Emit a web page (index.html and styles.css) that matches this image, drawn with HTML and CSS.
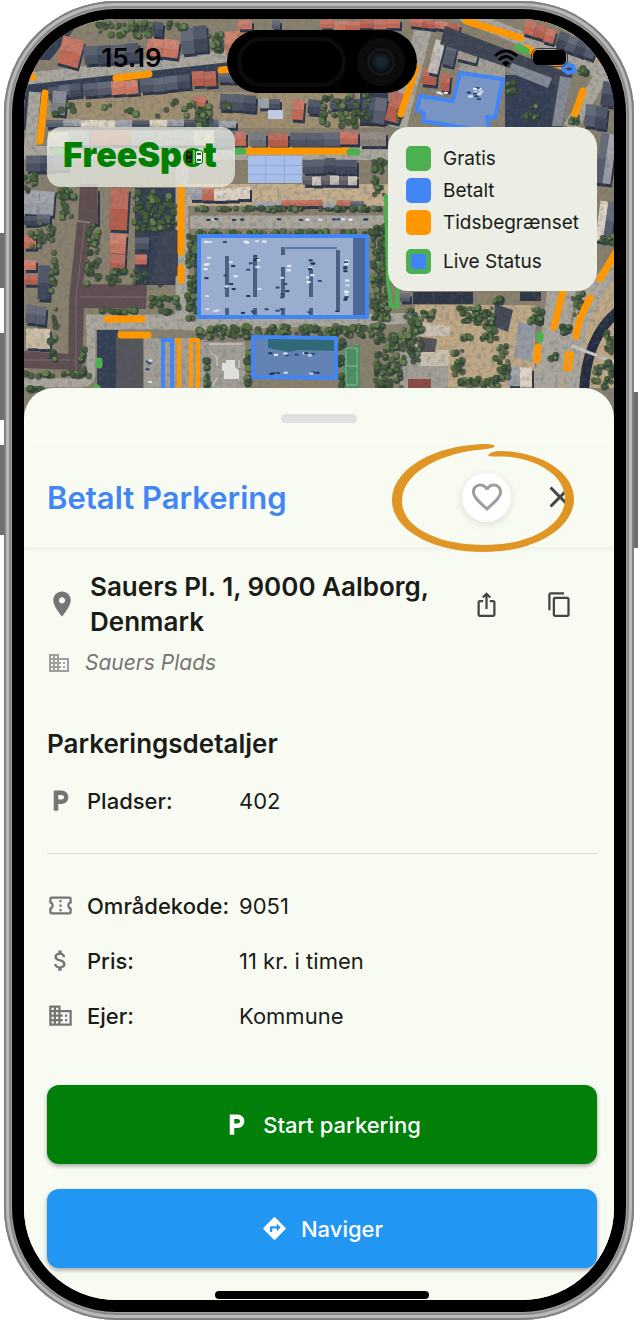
FILE: index.html
```html
<!DOCTYPE html>
<html lang="da">
<head>
  <meta charset="UTF-8">
  <meta name="viewport" content="width=device-width, initial-scale=1.0">
  <title>FreeSpot - Betalt Parkering</title>
  <link rel="stylesheet" href="styles.css">
</head>
<body>
  <div class="phone">
    <span class="side-button action"></span>
    <span class="side-button volume-up"></span>
    <span class="side-button volume-down"></span>
    <span class="side-button power"></span>
    <div class="bezel">
      <main class="screen">

        <section class="map">
          <svg class="map-picture" viewBox="24 19 590 400" preserveAspectRatio="xMidYMin slice" aria-hidden="true">
            <defs>
              <filter id="grain" x="0" y="0" width="100%" height="100%">
                <feTurbulence type="fractalNoise" baseFrequency="0.22" numOctaves="3" seed="4"/>
                <feColorMatrix values="0 0 0 0 0.1  0 0 0 0 0.13  0 0 0 0 0.18  2.6 0 0 0 -1.15"/>
              </filter>
            </defs>
            <rect x="24" y="19" width="590" height="400" fill="#8a816d"/>
            <!-- ground areas -->
            <path fill="#a08f70" d="M24 92H388V128H24z"/>
            <path fill="#c4ae8c" d="M185 184H388V206H185z"/>
            <path fill="#343e52" d="M24 74L230 62V74L48 96L44 130H24z M135 188H178V285H135z M97 330H118V388H97z M505 75H556V128H505z M360 93H388V126H360z M24 22H80L50 60H24z"/>
            <path fill="#bfa885" d="M415 305H535V388H415z M580 290L614 262V388H560z M560 19H614V90z"/>
            <!-- roads -->
            <g fill="none" stroke="#aca79d">
              <path stroke-width="12" d="M24 79L230 56"/>
              <path stroke-width="12" d="M35 92L30 150"/>
              <path stroke-width="14" d="M24 153H388"/>
              <path stroke-width="13" d="M182 160V322"/>
              <path stroke-width="13" d="M190 222H384"/>
              <path stroke-width="11" d="M186 325L420 318"/>
              <path stroke-width="15" d="M86 322H200"/>
              <path stroke-width="9" d="M91 316V372Q91 383 80 383H24"/>
              <path stroke-width="17" d="M426 19L398 128"/>
              <path stroke-width="14" d="M462 14L530 42L614 78"/>
              <path stroke-width="14" d="M610 62L570 128"/>
              <path stroke-width="28" d="M562 288L546 392"/>
              <path stroke-width="16" d="M614 268Q570 310 572 392"/>
            </g>
            <path fill="none" stroke="#242d3d" stroke-width="10" d="M617 312Q586 338 584 392"/>
            <path fill="none" stroke="#c9c7c1" stroke-width="3" d="M572 346L614 362"/>
            <path fill="#a39f95" d="M144 338H204V388H144z M204 342H245V388H204z M400 352H448V388H400z M465 50L505 62V80L458 70z"/>
            <g id="map-rows"></g>
            <!-- large buildings -->
            <path fill="#5f4d4f" d="M77 222L93 224L83 284L147 285L146 309L84 308L82 372H68L69 300z M24 351L70 354V370L24 368z M80 184H97V223L78 220z"/>
            <path fill="none" stroke="#806a69" stroke-width="1" d="M85 222L76 298V370M80 297H146M24 360H70"/>
            <path fill="#54555a" d="M116 337H143V388H116z"/>
            <path fill="#3d4351" d="M160 230H178V275L160 288L152 280z M445 26L560 70L574 66L562 128H550L556 84L440 44z"/>
            <path fill="#858b96" d="M512 63L552 78L548 88L508 72z M560 76L572 78L562 126H552z"/>
            <path fill="#2f3542" d="M413 292H473V304H413z M520 292H541V301H520z"/>
            <path fill="#969ba3" d="M518 322L536 325L531 362L515 357z"/>
            <path fill="#434753" d="M495 304L513 310L508 332L493 326z"/>
            <path fill="#cbbfae" d="M420 322L450 326V336H420z M420 350H449V366H420z"/>
            <path fill="#555357" d="M420 337L437 339L435 352H420z"/>
            <path fill="#8c4a44" d="M408 379H431V388H408z"/>
            <path fill="#4e9063" d="M343 345H360V388H343z"/>
            <path fill="none" stroke="#8dbf96" stroke-width="1" d="M346 348H357V385H346zM346 366H357"/>
            <g id="map-trees"></g>
            <rect x="24" y="19" width="590" height="400" filter="url(#grain)" opacity="0.35"/>
            <path fill="#dedfdc" d="M226 360H235V367L239 370V379H224V371H222V363H226z"/>
            <path fill="none" stroke="#d5d5d0" stroke-width="1" d="M209 344H242M211 353L217 357V366M212 386L217 378M239 360V368"/>
            <g fill="#a8bde8">
              <path d="M248 156H302V183H248z"/>
              <path fill="#8ea9dc" d="M248 165H302V166H248z M265 156H266V183H265z M284 156H285V183H284z M248 174H302V175H248z"/>
              <path fill="#c0cbe2" d="M268 110H283V119H268z"/>
            </g>
            <!-- parking lots -->
            <g stroke="#4285f4" stroke-width="4" stroke-linejoin="round">
              <path fill="#9badce" d="M199 236H367V317H199z"/>
              <path fill="#6483b5" d="M253 337L336 338V378L253 377z"/>
              <path fill="#7894c2" d="M460 73L503 79L495 118L487 117L490 132L423 121L424 113L417 110L420 96L453 101z"/>
            </g>
            <path fill="#2b4a83" opacity="0.7" d="M353 238H365V315H353z"/>
            <path fill="none" stroke="#4b5f83" stroke-width="4" d="M227 256V297M255 256V297M283 267V297M311 267V297M338 250V312M227 308V315M255 308V315M283 308V315M311 308V315M283 247V255"/>
            <path fill="none" stroke="#5b77a5" stroke-width="2" d="M283 248H337"/>
            <path fill="#2f6a79" d="M268 339L334 340V351L300 350L288 352L268 348z"/>
            <g id="map-cars"></g>
            <!-- street parking -->
            <g fill="none" stroke="#ff9800" stroke-width="7" stroke-linecap="round">
              <path d="M116 78L149 74M221 70L232 69M45 93L40 141M30 77H33"/>
              <path d="M181 188V252M181 268V280M107 319H142M121 335H148"/>
              <path d="M466 21L521 38M526 48L562 66M583 91L575 114M416 68L401 114"/>
              <path d="M563 290L554 327M590 298Q578 320 576 336M616 252L600 279M538 347L537 360"/>
              <path stroke-linecap="butt" d="M244 151H350"/>
            </g>
            <g fill="none" stroke="#ff9800" stroke-width="4" stroke-linejoin="round">
              <path d="M175 340H179V392M191 392V340H198V392M567 353L572 354L570 369H565z"/>
            </g>
            <g fill="none" stroke="#4caf50" stroke-width="7" stroke-linecap="round">
              <path d="M54 151H61M236 151H243M350 152H357M99 361V365M97 388V392M540 335V339M518 47L526 51"/>
              <path stroke-width="4" d="M386 196L388 280L391 306L397 307V288"/>
            </g>
            <path fill="none" stroke="#4285f4" stroke-width="4" d="M163 392V340H172V392M565 64L573 66L575 71L568 73L563 69z"/>
          </svg>

          <header class="status-bar">
            <time class="clock">15.19</time>
            <div class="island">
              <span class="speaker"></span>
              <span class="camera"></span>
            </div>
            <div class="status-icons">
              <svg class="wifi" viewBox="0 0 26 20" aria-hidden="true">
                <path d="M2 8Q13-2 24 8M6 12Q13 5 20 12" fill="none" stroke="#000" stroke-width="3"/>
                <path d="M9 15Q13 11 17 15L13 19z"/>
              </svg>
              <span class="battery"></span>
            </div>
          </header>

          <div class="map-overlay">
            <div class="logo">
              <span class="logo-text">FreeSpot</span>
              <svg class="logo-cars" viewBox="0 0 18 14" aria-hidden="true">
                <rect width="18" height="14" rx="3" fill="#008000"/>
                <rect x="1" y="1" width="6" height="12" rx="2"/>
                <path d="M2 4H6M2 10H6" stroke="#00a000"/>
                <path d="M9 0V14" stroke="#e8ece4"/>
                <rect x="11" y="1" width="6" height="12" rx="2" fill="#fff"/>
                <path d="M12 4H16M12 10H16" stroke="#008000" stroke-width="2"/>
              </svg>
            </div>
            <ul class="legend">
              <li><span class="swatch free"></span>Gratis</li>
              <li><span class="swatch paid"></span>Betalt</li>
              <li><span class="swatch limited"></span>Tidsbegrænset</li>
              <li class="legend-live"><span class="swatch live"></span>Live Status</li>
            </ul>
          </div>
        </section>

        <section class="sheet">
          <div class="handle"></div>

          <header class="sheet-header">
            <h1>Betalt Parkering</h1>
            <div class="actions">
              <button class="icon-button favorite" aria-label="Favorit">
                <svg class="icon-large" viewBox="0 0 24 24"><path d="M16.500 3c-1.740 0-3.410.810-4.500 2.090C10.910 3.810 9.240 3 7.500 3 4.420 3 2 5.420 2 8.500c0 3.780 3.400 6.860 8.550 11.540L12 21.350l1.450-1.320C18.600 15.360 22 12.280 22 8.500 22 5.420 19.580 3 16.500 3zm-4.400 15.550l-.1.100-.1-.1C7.140 14.240 4 11.390 4 8.500 4 6.500 5.500 5 7.500 5c1.540 0 3.040.990 3.570 2.360h1.870C13.460 5.990 14.960 5 16.500 5c2 0 3.500 1.500 3.500 3.500 0 2.890-3.140 5.740-7.900 10.050z"/></svg>
              </button>
              <button class="icon-button" aria-label="Luk">
                <svg class="icon-large" viewBox="0 0 24 24"><path d="M19 6.410L17.590 5 12 10.590 6.410 5 5 6.410 10.590 12 5 17.590 6.410 19 12 13.410 17.590 19 19 17.590 13.410 12z"/></svg>
              </button>
            </div>
            <svg class="highlight" viewBox="0 0 184 110" aria-hidden="true">
              <path d="M104 3C100 0 90 1 80 2C36 6 1 29 1 57C1 87 41 109 93 109C146 109 183 84 183 56C183 28 148 9 111 8C102 8 98 10 97 13C104 14 112 13 120 14C150 18 174 34 174 56C174 80 142 102 94 102C46 102 11 84 11 58C11 32 44 12 86 7C94 6 102 6 104 3z"/>
            </svg>
          </header>

          <div class="details">
            <div class="address">
              <svg class="pin" viewBox="0 0 24 24" aria-hidden="true"><path d="M12 2C8.130 2 5 5.130 5 9c0 5.250 7 13 7 13s7-7.750 7-13c0-3.870-3.130-7-7-7zm0 9.500c-1.380 0-2.500-1.120-2.500-2.500s1.120-2.500 2.500-2.500 2.500 1.120 2.500 2.500-1.120 2.500-2.500 2.500z"/></svg>
              <h2>Sauers Pl. 1, 9000 Aalborg, Denmark</h2>
              <div class="actions">
                <button class="icon-button" aria-label="Del">
                  <svg class="icon" viewBox="0 0 24 24"><path d="M16 5l-1.420 1.420-1.590-1.590V16h-1.980V4.830L9.420 6.420 8 5l4-4 4 4zm4 5v11c0 1.100-.9 2-2 2H6c-1.110 0-2-.9-2-2V10c0-1.110.890-2 2-2h3v2H6v11h12V10h-3V8h3c1.100 0 2 .890 2 2z"/></svg>
                </button>
                <button class="icon-button" aria-label="Kopier">
                  <svg class="icon" viewBox="0 0 24 24"><path d="M16 1H4c-1.100 0-2 .9-2 2v14h2V3h12V1zm3 4H8c-1.100 0-2 .9-2 2v14c0 1.100.9 2 2 2h11c1.100 0 2-.9 2-2V7c0-1.100-.9-2-2-2zm0 16H8V7h11v14z"/></svg>
                </button>
              </div>
            </div>
            <p class="place">
              <svg class="icon-small" viewBox="0 0 24 24" aria-hidden="true"><path d="M12 7V3H2v18h20V7H12zM6 19H4v-2h2v2zm0-4H4v-2h2v2zm0-4H4V9h2v2zm0-4H4V5h2v2zm4 12H8v-2h2v2zm0-4H8v-2h2v2zm0-4H8V9h2v2zm0-4H8V5h2v2zm10 12h-8v-2h2v-2h-2v-2h2v-2h-2V9h8v10zm-2-8h-2v2h2v-2zm0 4h-2v2h2v-2z"/></svg>
              <em>Sauers Plads</em>
            </p>

            <h2 class="details-title">Parkeringsdetaljer</h2>
            <dl class="facts">
              <div class="fact">
                <dt>
                  <svg class="icon" viewBox="0 0 24 24" aria-hidden="true"><path d="M13 3H6v18h4v-6h3c3.310 0 6-2.690 6-6s-2.690-6-6-6zm.2 8H10V7h3.200c1.100 0 2 .9 2 2s-.9 2-2 2z"/></svg>
                  Pladser:
                </dt>
                <dd>402</dd>
              </div>
            </dl>
            <hr>
            <dl class="facts">
              <div class="fact">
                <dt>
                  <svg class="icon" viewBox="0 0 24 24" aria-hidden="true"><path d="M22 10V6c0-1.110-.9-2-2-2H4c-1.100 0-1.990.890-1.990 2v4c1.100 0 1.990.9 1.990 2s-.890 2-2 2v4c0 1.100.9 2 2 2h16c1.100 0 2-.9 2-2v-4c-1.100 0-2-.9-2-2s.9-2 2-2zm-2-1.460c-1.190.690-2 1.990-2 3.460s.810 2.770 2 3.460V18H4v-2.540c1.190-.690 2-1.990 2-3.460 0-1.480-.8-2.770-1.990-3.460L4 6h16v2.540zM11 15h2v2h-2zm0-4h2v2h-2zm0-4h2v2h-2z"/></svg>
                  Områdekode:
                </dt>
                <dd>9051</dd>
              </div>
              <div class="fact">
                <dt>
                  <svg class="icon" viewBox="0 0 24 24" aria-hidden="true"><path d="M11.800 10.900c-2.270-.590-3-1.200-3-2.150 0-1.090 1.010-1.850 2.700-1.850 1.780 0 2.440.850 2.500 2.100h2.210c-.070-1.720-1.120-3.300-3.210-3.810V3h-3v2.160c-1.940.420-3.500 1.680-3.500 3.610 0 2.310 1.910 3.460 4.700 4.130 2.500.6 3 1.480 3 2.410 0 .690-.490 1.790-2.700 1.790-2.060 0-2.870-.920-2.980-2.100h-2.200c.120 2.190 1.760 3.420 3.680 3.830V21h3v-2.150c1.950-.370 3.500-1.500 3.500-3.550 0-2.840-2.430-3.810-4.700-4.400z"/></svg>
                  Pris:
                </dt>
                <dd>11 kr. i timen</dd>
              </div>
              <div class="fact">
                <dt>
                  <svg class="icon" viewBox="0 0 24 24" aria-hidden="true"><path d="M12 7V3H2v18h20V7H12zM6 19H4v-2h2v2zm0-4H4v-2h2v2zm0-4H4V9h2v2zm0-4H4V5h2v2zm4 12H8v-2h2v2zm0-4H8v-2h2v2zm0-4H8V9h2v2zm0-4H8V5h2v2zm10 12h-8v-2h2v-2h-2v-2h2v-2h-2V9h8v10zm-2-8h-2v2h2v-2zm0 4h-2v2h2v-2z"/></svg>
                  Ejer:
                </dt>
                <dd>Kommune</dd>
              </div>
            </dl>

            <button class="main-button start">
              <svg class="icon" viewBox="0 0 24 24" aria-hidden="true"><path d="M13 3H6v18h4v-6h3c3.310 0 6-2.690 6-6s-2.690-6-6-6zm.2 8H10V7h3.200c1.100 0 2 .9 2 2s-.9 2-2 2z"/></svg>
              Start parkering
            </button>
            <button class="main-button navigate">
              <svg class="icon" viewBox="0 0 24 24" aria-hidden="true"><path d="M21.710 11.290l-9-9c-.390-.390-1.020-.390-1.410 0l-9 9c-.390.390-.390 1.020 0 1.410l9 9c.390.390 1.020.390 1.410 0l9-9c.390-.380.390-1.010 0-1.410zM14 14.500V12h-4v3H8v-4c0-.550.450-1 1-1h5V7.500l3.500 3.500-3.500 3.500z"/></svg>
              Naviger
            </button>
            <div class="home-bar"></div>
          </div>
        </section>

      </main>
    </div>
  </div>
  <script src="map.js"></script>
</body>
</html>
```
FILE: styles.css
```css
* {
  box-sizing: border-box;
}

body {
  margin: 0;
  background-color: #fff;
  font-family: Inter, "Liberation Sans", sans-serif;
  color: #1a1c18;
}

h1, h2, p, ul, dl, dd {
  margin: 0;
  padding: 0;
}

button {
  border: none;
  padding: 0;
  font-family: inherit;
  cursor: pointer;
}

svg {
  display: block;
  fill: currentColor;
}

/* phone frame */
.phone {
  position: relative;
  margin: 1px 6px 0 4px;
  padding: 8px;
  border-radius: 112px;
  background-color: #a5a5a5;
  box-shadow: inset 0 0 1px 2px #7d7d80, inset 0 0 1px 5px #bdbdbb, inset 0 0 1px 7px #858585;
}

.bezel {
  padding: 10px 12px 12px;
  border-radius: 104px;
  background-color: #000;
}

.screen {
  overflow: hidden;
  border-radius: 92px;
  background-color: #f8fbf2;
}

.side-button {
  position: absolute;
  left: -4px;
  width: 4px;
  background-color: #6f6f73;
}

.action {
  top: 232px;
  height: 55px;
}

.volume-up {
  top: 332px;
  height: 87px;
}

.volume-down {
  top: 444px;
  height: 90px;
}

.power {
  top: 391px;
  left: auto;
  right: -4px;
  height: 156px;
}

/* map */
.map {
  position: relative;
  height: 400px;
  overflow: hidden;
}

.map-picture {
  position: absolute;
  top: 0;
  left: 0;
  width: 100%;
  height: 100%;
}

.status-bar {
  position: relative;
  display: grid;
  grid-template-columns: 1fr 190px 1fr;
  align-items: center;
  padding: 11px 0 0 6px;
  color: #000;
}

.clock {
  padding-left: 6px;
  padding-bottom: 8px;
  text-align: center;
  font-size: 26px;
  font-weight: 600;
}

.island {
  display: flex;
  align-items: center;
  justify-content: space-between;
  height: 63px;
  padding: 0 12px 0 10px;
  border-radius: 32px;
  background-color: #000;
}

.speaker {
  width: 109px;
  height: 50px;
  border: 4px solid #0c0c0c;
  border-radius: 25px;
}

.camera {
  width: 48px;
  height: 48px;
  border: 9px solid #0c0c0c;
  border-radius: 50%;
  background: radial-gradient(circle, #16262e 20%, #0b0d10 50%, #1b1b1d 60%, #000 75%);
}

.status-icons {
  display: flex;
  align-items: center;
  gap: 14px;
  padding-left: 76px;
  padding-bottom: 8px;
}

.wifi {
  width: 26px;
  height: 20px;
}

.battery {
  width: 33px;
  height: 15px;
  border-radius: 5px;
  background-color: #000;
  outline: 1px solid #3b3b3b;
  outline-offset: 1px;
}

.map-overlay {
  position: relative;
  display: flex;
  align-items: flex-start;
  justify-content: space-between;
  padding: 34px 17px 0 23px;
}

.logo {
  position: relative;
  width: 188px;
  height: 60px;
  padding-left: 16px;
  border-radius: 14px;
  background-color: rgba(232, 234, 226, 0.78);
}

.logo-text {
  font-size: 34px;
  font-weight: 900;
  line-height: 56px;
  color: #008000;
}

.logo-cars {
  position: absolute;
  top: 23px;
  left: 138px;
  width: 18px;
  height: 14px;
}

.legend {
  display: grid;
  grid-auto-rows: 32px;
  padding: 15px 18px 21px;
  border-radius: 20px;
  background-color: #eceee6;
  list-style: none;
  font-size: 19px;
}

.legend li {
  display: flex;
  align-items: center;
  gap: 12px;
}

.legend-live {
  margin-top: 7px;
  margin-bottom: -7px;
}

.swatch {
  width: 25px;
  height: 25px;
  border-radius: 5px;
}

.free {
  background-color: #4caf50;
}

.paid {
  background-color: #4285f4;
}

.limited {
  background-color: #ff9800;
}

.live {
  border: 5px solid #4caf50;
  background-color: #4285f4;
}

/* bottom sheet */
.sheet {
  position: relative;
  margin-top: -31px;
  padding: 26px 0 1px;
  border-radius: 30px 30px 0 0;
  background-color: #f8fbf2;
}

.handle {
  width: 76px;
  height: 9px;
  margin: 0 auto 24px;
  border-radius: 5px;
  background-color: #e0e0e0;
}

.sheet-header {
  position: relative;
  display: flex;
  align-items: center;
  justify-content: space-between;
  height: 100px;
  padding: 0 30px 0 23px;
  box-shadow: 0 2px 5px rgba(0, 0, 0, 0.06);
}

h1 {
  font-size: 31px;
  font-weight: 600;
  color: #4285f4;
}

h2 {
  font-size: 26px;
  font-weight: 600;
  line-height: 35px;
}

.actions {
  display: flex;
  gap: 24px;
}

.icon-button {
  display: grid;
  place-items: center;
  width: 49px;
  height: 49px;
  border-radius: 50%;
  background-color: transparent;
  color: #444;
}

.favorite {
  background-color: #fff;
  color: #9e9e9e;
  box-shadow: 0 2px 8px rgba(0, 0, 0, 0.12);
}

.highlight {
  position: absolute;
  top: -4px;
  right: 39px;
  width: 184px;
  height: 110px;
  color: #df9624;
  pointer-events: none;
}

.icon {
  width: 27px;
  height: 27px;
}

.icon-large {
  width: 36px;
  height: 36px;
}

.icon-small {
  width: 24px;
  height: 24px;
}

.details {
  padding: 22px 17px 0 23px;
}

.address {
  display: flex;
  align-items: center;
  padding-right: 13px;
}

.address h2 {
  flex: 1;
  margin-left: 13px;
}

.pin {
  width: 30px;
  height: 30px;
  color: #757575;
}

.place {
  display: flex;
  align-items: center;
  gap: 14px;
  margin-top: 11px;
  line-height: 26px;
  font-size: 21px;
  color: #757575;
}

.place svg {
  color: #9e9e9e;
}

.details-title {
  margin-top: 50px;
  margin-bottom: 12px;
}

.facts {
  font-size: 22px;
}

.fact {
  display: grid;
  grid-template-columns: 192px 1fr;
  align-items: center;
  height: 55px;
}

.fact dt {
  display: flex;
  align-items: center;
  gap: 13px;
  font-weight: 500;
  white-space: nowrap;
}

.fact svg {
  color: #757575;
}

hr {
  height: 1px;
  margin: 25px 0 24px;
  border: none;
  background-color: #d9dcd5;
}

.main-button {
  display: flex;
  align-items: center;
  justify-content: center;
  gap: 13px;
  width: 100%;
  height: 79px;
  margin-bottom: 25px;
  border-radius: 12px;
  font-size: 22px;
  font-weight: 500;
  color: #fff;
  box-shadow: 0 2px 4px rgba(0, 0, 0, 0.35);
}

.start {
  margin-top: 42px;
  background-color: #008009;
}

.navigate {
  margin-bottom: 23px;
  background-color: #2196f3;
}

.home-bar {
  width: 214px;
  height: 8px;
  margin: 0 auto;
  border-radius: 4px;
  background-color: #000;
}
```
FILE: map.js
```js
const NS = "http://www.w3.org/2000/svg";
let seed = 7;

function random() {
  seed = (seed * 16807) % 2147483647;
  return seed / 2147483647;
}

function pick(list) {
  return list[Math.floor(random() * list.length)];
}

function add(parent, name, attrs) {
  const el = document.createElementNS(NS, name);
  for (const key in attrs) {
    el.setAttribute(key, attrs[key]);
  }
  parent.appendChild(el);
}

const red = ["#c56a56", "#b85d4a", "#cc7660"];
const dark = ["#4a5160", "#555c6b", "#3e4657"];
const mixed = ["#c06854", "#555c6b", "#464d5b", "#9b9ea4", "#ddd1bf"];

// rows of roofs: x, y, width, height, number of houses, turn, colours
const rows = [
  [60, 36, 22, 28, 1, 15, red], [84, 44, 55, 18, 4, -5, dark],
  [147, 38, 32, 18, 2, 8, red], [181, 26, 26, 26, 2, -4, dark],
  [153, 21, 10, 14, 1, 5, dark], [225, 29, 30, 24, 2, -5, red],
  [238, 19, 14, 9, 1, 0, red], [272, 19, 8, 9, 1, 0, dark],
  [48, 84, 33, 13, 3, -6, dark], [83, 82, 28, 13, 2, -5, dark],
  [111, 79, 27, 14, 2, -5, red], [140, 76, 50, 14, 4, -5, dark],
  [192, 70, 24, 15, 2, -4, red], [218, 72, 22, 10, 2, 0, dark],
  [52, 90, 14, 24, 1, 5, ["#7c8088"]],
  [46, 119, 190, 7, 11, 0, mixed], [193, 95, 13, 10, 1, 5, red],
  [220, 94, 36, 16, 3, 4, dark], [258, 98, 22, 10, 2, 0, mixed],
  [292, 98, 12, 20, 1, 5, red], [308, 98, 14, 14, 1, 5, dark],
  [48, 130, 187, 15, 9, 0, mixed], [235, 131, 11, 14, 1, 0, red],
  [250, 131, 16, 14, 1, 0, ["#6c7078"]], [268, 131, 20, 14, 1, 0, red],
  [290, 131, 50, 14, 3, 0, dark], [340, 131, 18, 13, 1, 0, red],
  [360, 131, 26, 14, 1, 0, ["#8a8277"]],
  [26, 154, 42, 16, 3, 0, dark], [303, 158, 54, 14, 5, 0, dark],
  [303, 175, 54, 9, 6, 0, ["#c9c3b8", "#615d5f"]],
  [24, 190, 30, 24, 2, 4, mixed], [24, 235, 12, 13, 1, 0, red],
  [24, 258, 12, 10, 1, 0, red], [24, 273, 14, 10, 1, 0, red],
  [38, 265, 12, 34, 1, 2, dark], [26, 305, 20, 18, 2, 4, dark],
  [24, 214, 26, 9, 2, 0, dark], [26, 328, 24, 20, 2, 0, ["#c9baa0"]],
  [110, 187, 18, 42, 1, 3, red], [110, 233, 16, 20, 1, 3, red],
  [110, 254, 15, 18, 1, 3, ["#7d5550", "#b5604f"]],
  [90, 187, 8, 36, 1, 0, ["#674b4b"]], [135, 236, 14, 12, 1, 0, dark],
  [135, 254, 12, 10, 1, 0, red], [190, 187, 60, 12, 5, 0, mixed],
  [254, 200, 110, 6, 8, 0, mixed],
  [330, 98, 30, 10, 2, 0, dark], [362, 96, 24, 26, 2, 8, dark],
  [320, 19, 80, 9, 6, 0, red], [410, 20, 50, 8, 4, 8, red],
  [524, 24, 32, 14, 3, 16, red], [557, 36, 40, 16, 4, 20, dark],
  [422, 68, 15, 16, 1, 6, red], [441, 73, 9, 17, 1, 6, red],
  [445, 34, 12, 30, 1, 14, dark], [459, 40, 20, 20, 1, 14, ["#a29a8e"]],
  [432, 38, 10, 34, 1, 14, ["#c1bdb6"]], [602, 80, 14, 24, 1, 8, dark],
  [585, 104, 22, 22, 2, 6, dark], [388, 92, 14, 30, 1, 14, red],
  [598, 132, 16, 50, 2, 8, mixed], [598, 200, 16, 40, 2, 8, mixed],
  [508, 366, 24, 20, 2, 0, mixed], [400, 292, 10, 8, 1, 0, dark]
];

// trees: x, y, width, height, how many
const trees = [
  [97, 22, 54, 14, 38], [208, 30, 14, 24, 16], [165, 22, 30, 6, 8],
  [52, 100, 180, 16, 28], [195, 106, 16, 20, 24], [320, 94, 50, 32, 60],
  [24, 172, 14, 20, 12], [56, 188, 18, 10, 12], [28, 222, 24, 26, 22],
  [48, 250, 8, 110, 28], [86, 225, 12, 60, 34], [106, 268, 40, 16, 34],
  [133, 190, 42, 40, 80], [60, 190, 14, 30, 14], [150, 296, 28, 16, 26],
  [187, 234, 10, 84, 70], [195, 207, 185, 2, 54], [195, 231, 190, 3, 60],
  [372, 160, 12, 34, 22], [371, 226, 17, 94, 120], [196, 325, 56, 12, 48],
  [257, 325, 128, 11, 96], [375, 334, 26, 54, 84], [402, 308, 20, 54, 50],
  [205, 356, 2, 30, 12], [246, 350, 4, 36, 16], [338, 340, 5, 46, 20],
  [422, 310, 14, 10, 8], [456, 306, 38, 16, 40], [484, 314, 10, 22, 18],
  [452, 350, 10, 24, 16], [458, 378, 40, 9, 26], [494, 344, 14, 36, 28],
  [460, 335, 36, 4, 10], [528, 308, 14, 14, 20], [550, 350, 6, 8, 8],
  [560, 324, 10, 10, 12], [572, 290, 10, 24, 14], [592, 365, 22, 22, 24],
  [605, 330, 9, 40, 18], [494, 296, 8, 6, 8], [506, 82, 10, 12, 14],
  [578, 66, 8, 8, 10], [570, 116, 8, 8, 8], [520, 104, 18, 16, 10],
  [24, 372, 64, 4, 24], [80, 345, 5, 30, 12], [24, 386, 20, 4, 10],
  [600, 232, 14, 14, 10], [396, 110, 6, 12, 6], [98, 309, 46, 3, 16]
];

const rowLayer = document.getElementById("map-rows");
rows.forEach(([x, y, w, h, n, turn, colors]) => {
  const step = w / n;
  for (let i = 0; i < n; i++) {
    const color = pick(colors);
    const left = x + i * step;
    const top = y + random() * 2;
    const transform = `rotate(${turn} ${x + w / 2} ${y + h / 2})`;
    add(rowLayer, "rect", { x: left + 2, y: top + 3, width: step, height: h, fill: "#2b3447", transform });
    add(rowLayer, "rect", { x: left, y: top, width: step, height: h, fill: color, transform });
    add(rowLayer, "rect", { x: left, y: top, width: step, height: h / 2, fill: "#fff", opacity: 0.1, transform });
  }
});

const treeLayer = document.getElementById("map-trees");
trees.forEach(([x, y, w, h, n]) => {
  for (let i = 0; i < n; i++) {
    const cx = x + random() * w;
    const cy = y + random() * h;
    const r = 1 + random() * 2;
    add(treeLayer, "circle", { cx: cx + 1, cy: cy + 1, r: r + 1, fill: "#2c3c33", opacity: 0.7 });
    add(treeLayer, "circle", { cx: cx, cy: cy, r: r, fill: pick(["#4a6138", "#57723f", "#65824b", "#415a37"]) });
  }
});

// parked cars: x, y, width, height, how many
const carLayer = document.getElementById("map-cars");
[
  [203, 240, 60, 2, 8], [203, 308, 140, 4, 12], [203, 248, 4, 50, 6],
  [220, 252, 14, 44, 8], [246, 254, 16, 42, 10], [275, 264, 14, 34, 8],
  [304, 252, 14, 36, 9], [343, 256, 3, 54, 16], [264, 352, 60, 3, 9],
  [260, 371, 60, 2, 8], [466, 87, 14, 14, 14], [200, 218, 180, 1, 16],
  [145, 345, 4, 38, 5], [430, 91, 20, 2, 4]
].forEach(([x, y, w, h, n]) => {
  for (let i = 0; i < n; i++) {
    const cx = x + random() * w;
    const cy = y + random() * h;
    add(carLayer, "rect", { x: cx, y: cy, width: 4, height: 2, fill: pick(["#eef2f8", "#23375c", "#d5deee", "#344b75"]) });
  }
});
```
